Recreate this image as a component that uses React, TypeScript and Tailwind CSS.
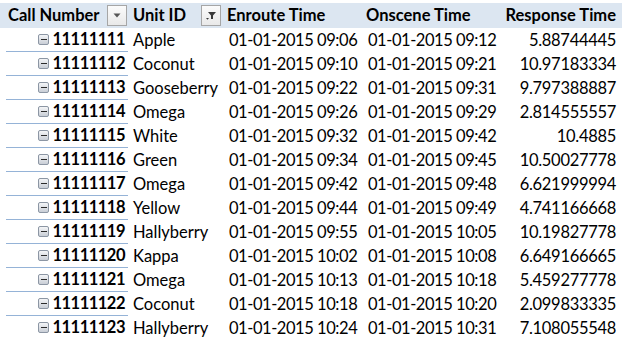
import React from "react";

const rows: [string, string, string, string, string][] = [
  ["11111111", "Apple", "01-01-2015 09:06", "01-01-2015 09:12", "5.88744445"],
  ["11111112", "Coconut", "01-01-2015 09:10", "01-01-2015 09:21", "10.97183334"],
  ["11111113", "Gooseberry", "01-01-2015 09:22", "01-01-2015 09:31", "9.797388887"],
  ["11111114", "Omega", "01-01-2015 09:26", "01-01-2015 09:29", "2.814555557"],
  ["11111115", "White", "01-01-2015 09:32", "01-01-2015 09:42", "10.4885"],
  ["11111116", "Green", "01-01-2015 09:34", "01-01-2015 09:45", "10.50027778"],
  ["11111117", "Omega", "01-01-2015 09:42", "01-01-2015 09:48", "6.621999994"],
  ["11111118", "Yellow", "01-01-2015 09:44", "01-01-2015 09:49", "4.741166668"],
  ["11111119", "Hallyberry", "01-01-2015 09:55", "01-01-2015 10:05", "10.19827778"],
  ["11111120", "Kappa", "01-01-2015 10:02", "01-01-2015 10:08", "6.649166665"],
  ["11111121", "Omega", "01-01-2015 10:13", "01-01-2015 10:18", "5.459277778"],
  ["11111122", "Coconut", "01-01-2015 10:18", "01-01-2015 10:20", "2.099833335"],
  ["11111123", "Hallyberry", "01-01-2015 10:24", "01-01-2015 10:31", "7.108055548"],
];

function DropButton({ filter }: { filter?: boolean }) {
  return (
    <div className="flex h-[21px] w-[20px] items-center justify-center border border-[#a6a6a6] bg-gradient-to-b from-[#fbfbfb] to-[#e9e9e9]">
      {filter ? (
        <svg width="12" height="10" viewBox="0 0 12 10">
          <path d="M3 1h8L8 4.5V8H6V4.5Z" fill="#3a3a3a" />
          <path d="M1 7h3L2.5 8.8Z" fill="#3a3a3a" />
        </svg>
      ) : (
        <svg width="8" height="5" viewBox="0 0 8 5">
          <path d="M0.5 0.5h7L4 4.5Z" fill="#555" />
        </svg>
      )}
    </div>
  );
}

function MinusBox() {
  return (
    <div className="flex h-[11px] w-[11px] items-center justify-center rounded-[2px] border border-[#8c96a4] bg-gradient-to-b from-[#f4f5f7] to-[#c9ced6]">
      <div className="h-[1.5px] w-[6px] bg-[#2b2b2b]" />
    </div>
  );
}

export default function App() {
  return (
    <div
      className="h-[338px] w-[627px] overflow-hidden whitespace-nowrap bg-white pt-[3px] text-[16.5px] text-black"
      style={{ fontFamily: "Lato, 'Liberation Sans', sans-serif" }}
    >
      <div className="flex h-[25px] w-[622px] items-center bg-[#dce6f1] font-bold">
        <div className="flex w-[130px] items-center pl-[8px]">
          <span className="w-[99px]">Call Number</span>
          <DropButton />
        </div>
        <div className="flex w-[94px] items-center pl-[3px]">
          <span className="w-[68px]">Unit ID</span>
          <DropButton filter />
        </div>
        <div className="w-[139px] pl-[3px]">Enroute Time</div>
        <div className="w-[137px] pl-[3px]">Onscene Time</div>
        <div className="w-[122px] pr-[6px] text-right">Response Time</div>
      </div>
      {rows.map((r) => (
        <div key={r[0]} className="flex h-[24px] w-[622px] items-center">
          <div className="flex h-full w-[130px] items-center pl-[6px] pr-[2px]">
            <div className="flex h-full w-full items-center justify-end gap-[3px] border-b border-[#95b3d7] pr-[3px]">
              <MinusBox />
              <span className="font-bold tabular-nums tracking-[-0.5px]">{r[0]}</span>
            </div>
          </div>
          <div className="w-[94px] pl-[3px]">{r[1]}</div>
          <div className="w-[139px] pl-[5px] tabular-nums tracking-[-0.45px]">{r[2]}</div>
          <div className="w-[137px] pl-[5px] tabular-nums tracking-[-0.45px]">{r[3]}</div>
          <div className="w-[122px] pr-[6px] text-right tabular-nums tracking-[-0.3px]">{r[4]}</div>
        </div>
      ))}
    </div>
  );
}
